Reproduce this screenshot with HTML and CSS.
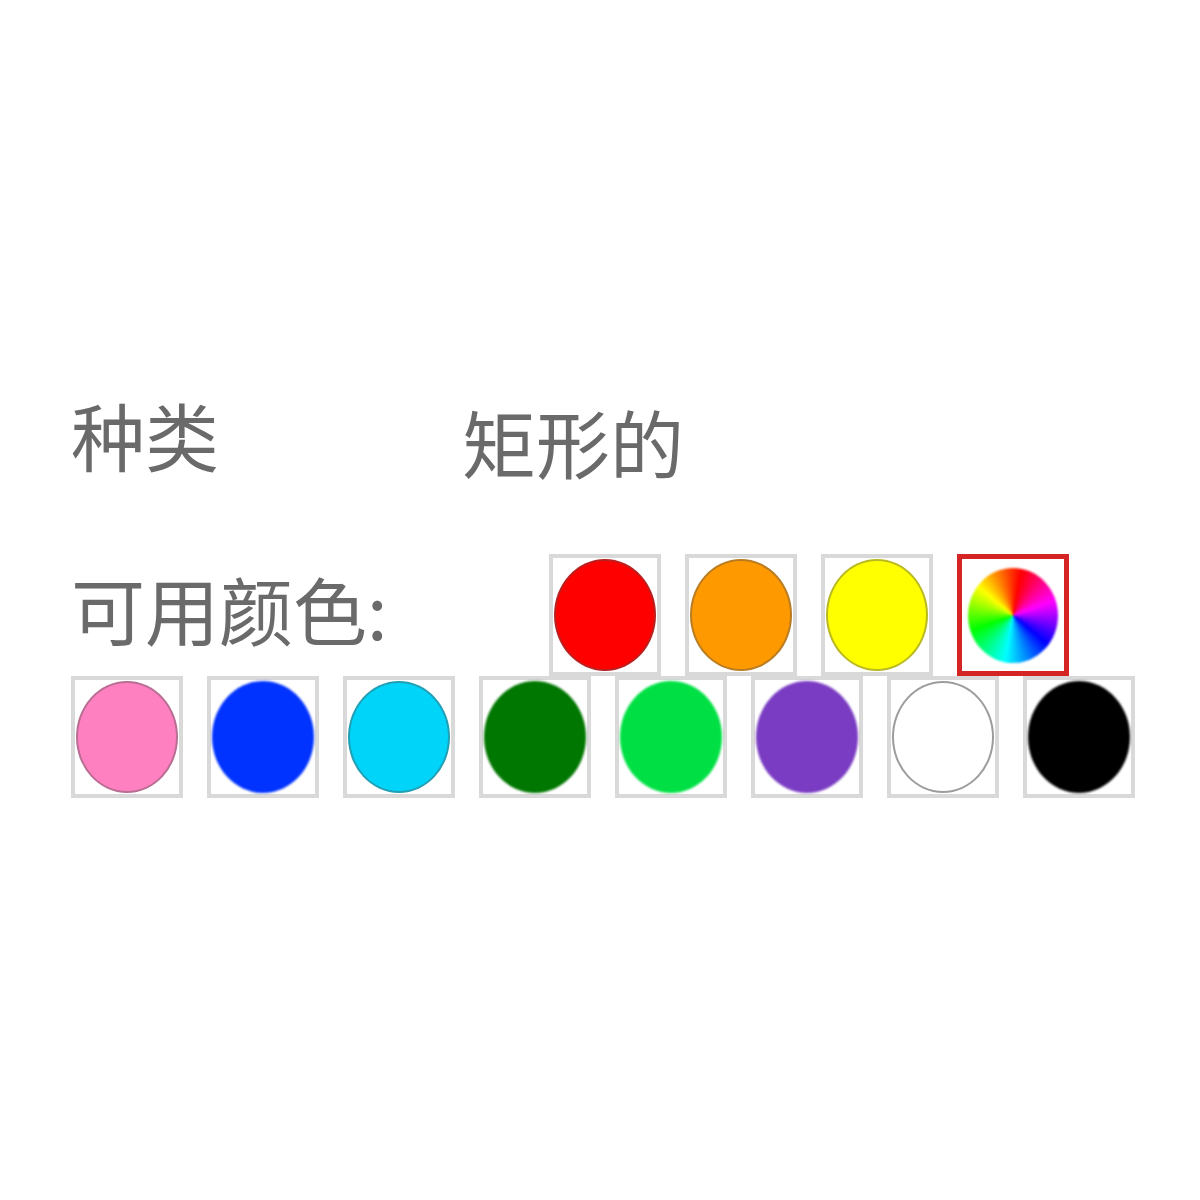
FILE: index.html
```html
<!DOCTYPE html>
<html lang="zh-CN">
<head>
<meta charset="utf-8">
<title>颜色选择</title>
<link rel="stylesheet" href="styles.css">
</head>
<body>
<div class="panel">
  <div class="type-row">
    <span class="label">种类</span>
    <span class="value">矩形的</span>
  </div>
  <div class="colors-row">
    <span class="colors-label">可用颜色:</span>
    <span class="swatch"><span class="dot c-red"></span></span>
    <span class="swatch"><span class="dot c-orange"></span></span>
    <span class="swatch"><span class="dot c-yellow"></span></span>
    <span class="swatch selected"><span class="dot c-rainbow"></span></span>
    <span class="swatch"><span class="dot c-pink"></span></span>
    <span class="swatch"><span class="dot c-blue soft"></span></span>
    <span class="swatch"><span class="dot c-cyan"></span></span>
    <span class="swatch"><span class="dot c-darkgreen soft"></span></span>
    <span class="swatch"><span class="dot c-green soft"></span></span>
    <span class="swatch"><span class="dot c-purple soft"></span></span>
    <span class="swatch"><span class="dot c-white"></span></span>
    <span class="swatch"><span class="dot c-black soft"></span></span>
  </div>
</div>
</body>
</html>
```
FILE: styles.css
```css
html, body {
  margin: 0;
  padding: 0;
  background: #ffffff;
}

body {
  font-family: "Noto Sans CJK SC", "Noto Sans", sans-serif;
  color: #6a6a6a;
}

.panel {
  padding: 397px 0 0 71px;
  width: 1100px;
}

.type-row {
  display: flex;
  align-items: flex-start;
  font-size: 74px;
  line-height: 74px;
}

.label {
  flex: 0 0 391px;
}

.value {
  padding-top: 7px;
}

.colors-row {
  margin-top: 76px;
  display: flex;
  flex-wrap: wrap;
  align-items: center;
  column-gap: 24px;
  row-gap: 0;
}

.colors-label {
  flex: 0 0 454px;
  font-size: 74px;
  line-height: 74px;
  padding-bottom: 14px;
}

.swatch {
  box-sizing: border-box;
  width: 112px;
  height: 122px;
  border: 4px solid #d9d9d9;
  padding: 1px;
  display: flex;
  align-items: center;
  justify-content: center;
  background: #ffffff;
}

.swatch.selected {
  border: 5px solid #d42424;
  padding: 4px;
}

.dot {
  box-sizing: border-box;
  display: block;
  width: 102px;
  height: 112px;
  border-radius: 50%;
  border: 2px solid rgba(80, 80, 80, 0.4);
}

.dot.soft {
  border: 0;
  filter: blur(1.2px);
}

.selected .dot {
  width: 90px;
  height: 95px;
  border: 0;
  filter: blur(0.8px);
}

.c-red { background: #ff0000; }
.c-orange { background: #ff9900; }
.c-yellow { background: #ffff00; }
.c-pink { background: #ff80c0; }
.c-blue { background: #0033ff; }
.c-cyan { background: #00d4f8; }
.c-darkgreen { background: #007700; }
.c-green { background: #00e044; }
.c-purple { background: #7a3cc2; }
.c-white { background: #ffffff; border-color: rgba(90, 90, 90, 0.6); }
.c-black { background: #000000; }

.c-rainbow {
  background: conic-gradient(from 10deg, #ff0000, #ff00ff, #0000ff, #00ffff, #00ff00, #ffff00, #ff0000);
}
```
